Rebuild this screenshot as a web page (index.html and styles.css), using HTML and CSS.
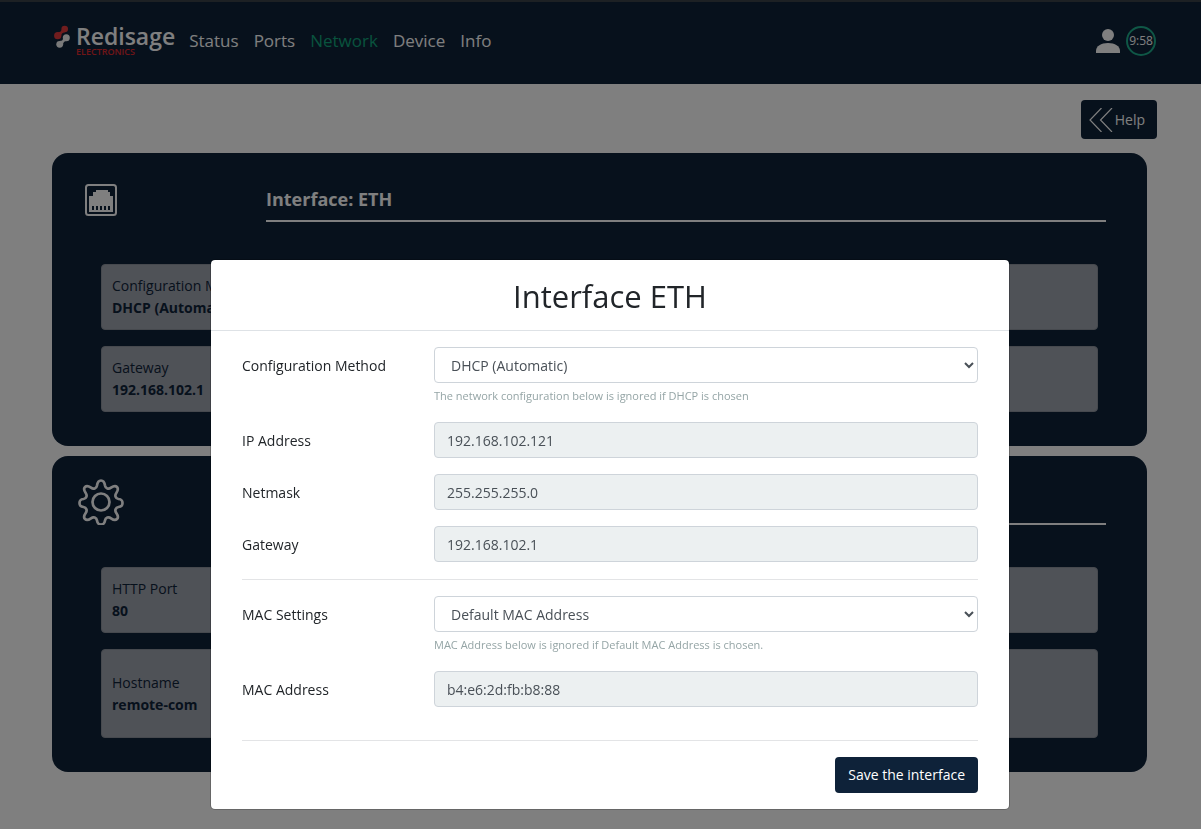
FILE: index.html
```html
<!DOCTYPE html>
<html lang="en">
<head>
<meta charset="utf-8">
<title>Redisage Electronics - Network</title>
<link rel="stylesheet" href="styles.css">
</head>
<body>
<header class="navbar">
  <a class="brand" href="#">
    <svg class="brand-mark" viewBox="0 0 16 24" aria-hidden="true">
      <g fill="#e23a3d"><circle cx="10.700" cy="4" r="3.300"/><circle cx="3.700" cy="10.700" r="3.600"/><path d="M7.500 4.500Q7.500 7.200 4 7.200L7.200 11.500Q7 7.500 11 7.200z"/></g>
      <g fill="#f5f5f5"><circle cx="12.300" cy="12.700" r="3.500"/><circle cx="5.700" cy="19.300" r="3.400"/><path d="M9 13.500Q9 16 5.500 16L9 20Q9 16.300 12.500 16z"/></g>
    </svg>
    <span class="brand-text"><span class="brand-name">Redisage</span><span class="brand-sub">ELECTRONICS</span></span>
  </a>
  <nav class="nav">
    <a href="#">Status</a>
    <a href="#">Ports</a>
    <a href="#" class="active">Network</a>
    <a href="#">Device</a>
    <a href="#">Info</a>
  </nav>
  <div class="session">
    <svg class="user" viewBox="0 0 24 24" fill="currentColor" aria-hidden="true"><circle cx="12" cy="6" r="6"/><path d="M0 24v-2c0-5 5-8 12-8s12 3 12 8v2z"/></svg>
    <span class="timer">9:58</span>
  </div>
</header>

<main class="page">
  <div class="toolbar">
    <button type="button" class="help"><svg class="chevrons" viewBox="0 0 24 24" fill="none" stroke="currentColor" stroke-width="1.200" aria-hidden="true"><path d="M12.500 0 1 12l11.500 12M23 0 11.500 12 23 24"/></svg>Help</button>
  </div>

  <section class="card">
    <div class="card-head">
      <svg class="icon-port" viewBox="0 0 32 32" aria-hidden="true"><rect x="1" y="1" width="30" height="30" rx="2.500" fill="none" stroke="currentColor" stroke-width="2"/><path fill="currentColor" d="M4 12h4V8h3V6h12v2h2v4h3v16H4z"/><path stroke="#0e2239" stroke-width="2" d="M8 22v4M12 22v4M16 22v4M20 22v4M24 22v4"/></svg>
      <h2 class="card-title">Interface: ETH</h2>
    </div>
    <dl class="tiles">
      <div class="tile"><dt>Configuration Method</dt><dd>DHCP (Automatic)</dd></div>
      <div class="tile"><dt>Gateway</dt><dd>192.168.102.1</dd></div>
    </dl>
  </section>

  <section class="card">
    <div class="card-head">
      <svg class="icon-gear" viewBox="0 0 46 46" fill="none" stroke="currentColor" stroke-width="2.700" stroke-linejoin="round" aria-hidden="true"><circle cx="23" cy="23" r="8.500"/><path d="M19 6.500C19.500 3 20.800 1.500 23 1.500s3.500 1.500 4 5c.5 3 3.500 4 6 2.200 2.800-2 4.600-2.200 6-.7s1.200 3.200-.7 6c-1.800 2.500-.8 5.500 2.200 6 3.500.5 4 1.800 4 4s-.5 3.500-4 4c-3 .5-4 3.500-2.200 6 2 2.800 2.200 4.500.7 6s-3.200 1.300-6-.7c-2.500-1.800-5.500-.8-6 2.200-.5 3.500-1.800 4-4 4s-3.500-.5-4-4c-.5-3-3.500-4-6-2.200-2.800 2-4.500 2.200-6 .7s-1.300-3.200.7-6c1.800-2.500.8-5.500-2.200-6-3.500-.5-4-1.800-4-4s.5-3.500 4-4c3-.5 4-3.500 2.200-6-2-2.800-2.200-4.500-.7-6s3.200-1.300 6 .7c2.500 1.800 5.500.8 6-2.200z"/></svg>
      <div class="card-title"></div>
    </div>
    <dl class="tiles">
      <div class="tile"><dt>HTTP Port</dt><dd>80</dd></div>
      <div class="tile tall"><dt>Hostname</dt><dd>remote-com</dd></div>
    </dl>
  </section>
</main>

<div class="backdrop">
  <form class="modal" role="dialog" aria-labelledby="dialog-title">
    <h1 class="modal-title" id="dialog-title">Interface ETH</h1>
    <div class="modal-body">
      <div class="row">
        <label for="method">Configuration Method</label>
        <div><select id="method" class="control"><option>DHCP (Automatic)</option></select>
        <small class="hint">The network configuration below is ignored if DHCP is chosen</small></div>
      </div>
      <div class="row"><label for="ip">IP Address</label><input class="control" id="ip" value="192.168.102.121" readonly></div>
      <div class="row"><label for="mask">Netmask</label><input class="control" id="mask" value="255.255.255.0" readonly></div>
      <div class="row"><label for="gw">Gateway</label><input class="control" id="gw" value="192.168.102.1" readonly></div>
      <hr>
      <div class="row">
        <label for="macset">MAC Settings</label>
        <div><select id="macset" class="control"><option>Default MAC Address</option></select>
        <small class="hint">MAC Address below is ignored if Default MAC Address is chosen.</small></div>
      </div>
      <div class="row"><label for="mac">MAC Address</label><input class="control" id="mac" value="b4:e6:2d:fb:b8:88" readonly></div>
      <hr class="last">
      <div class="actions"><button type="submit" class="save">Save the interface</button></div>
    </div>
  </form>
</div>
</body>
</html>
```
FILE: styles.css
```css
* { box-sizing: border-box; }

body {
  margin: 0;
  background: #fff;
  color: #212529;
  font-family: "Open Sans", "Noto Sans", sans-serif;
  font-size: 14px;
  line-height: 22px;
}

a { color: inherit; text-decoration: none; }

button, input, select { font: inherit; }

svg { display: block; flex: none; }

.navbar {
  display: flex;
  align-items: center;
  height: 84px;
  padding: 0 45px 4px 54px;
  border-top: 2px solid #3a4248;
  background: #0e2239;
  color: #fff;
}

.brand { display: flex; gap: 6px; }
.brand-mark { width: 16px; height: 24px; }
.brand-text { display: flex; flex-direction: column; }
.brand-name { font-size: 23px; font-weight: 600; line-height: 22px; }
.brand-sub { color: #e02b2f; font-size: 9px; font-weight: 600; line-height: 10px; }

.nav { display: flex; gap: 15px; margin-left: 14px; font-size: 17px; }
.nav .active { color: #12a67c; }

.session { display: flex; align-items: center; gap: 6px; margin-left: auto; }
.user { width: 24px; height: 24px; }
.timer {
  width: 30px;
  height: 30px;
  border: 2px solid #1fae8c;
  border-radius: 50%;
  font-size: 12px;
  line-height: 26px;
  text-align: center;
}

.page { padding: 16px 54px 56px 52px; }

.toolbar { display: flex; justify-content: flex-end; margin: 0 -10px 14px 0; }
.help {
  display: flex;
  align-items: center;
  gap: 2px;
  height: 39px;
  padding: 0 12px 0 8px;
  border: 0;
  border-radius: 4px;
  background: #0e2239;
  color: #fff;
}
.chevrons { width: 24px; height: 24px; }

.card {
  padding: 23px 49px 34px;
  border-radius: 16px;
  background: #0e2239;
  color: #fff;
}
.card + .card { margin-top: 10px; }

.card-head {
  display: grid;
  grid-template-columns: 188px 1fr;
  height: 88px;
  margin: 0 -8px 0 -23px;
}
.icon-port { width: 32px; height: 32px; margin: 8px 0 0 7px; }
.icon-gear { width: 46px; height: 46px; }
.card-title {
  height: 46px;
  margin: 0;
  padding-top: 12px;
  border-bottom: 2px solid #fff;
  font-size: 18px;
  font-weight: 700;
}

.tiles { display: grid; gap: 16px; margin: 0; }
.tile {
  display: flex;
  flex-direction: column;
  justify-content: center;
  height: 66px;
  padding: 0 10px;
  border: 1px solid #8c939c;
  border-radius: 4px;
  background: #9fa4ae;
  color: #0e2239;
}
.tile.tall { height: 89px; }
.tile dd { margin: 0; font-weight: 700; }

.backdrop {
  position: fixed;
  inset: 0;
  display: flex;
  align-items: flex-start;
  justify-content: center;
  padding: 259px 0 0 19px;
  background: rgba(0, 0, 0, 0.5);
}
.modal {
  flex: 0 1 800px;
  border: 1px solid rgba(0, 0, 0, 0.2);
  border-radius: 5px;
  background: #fff;
  background-clip: padding-box;
}
.modal-title {
  margin: 0;
  padding: 17px 16px 15px;
  border-bottom: 1px solid #dee2e6;
  font-size: 31px;
  font-weight: 500;
  line-height: 38px;
  text-align: center;
}
.modal-body {
  display: flex;
  flex-direction: column;
  gap: 16px;
  padding: 16px 31px;
}
.row {
  display: grid;
  grid-template-columns: 192px 1fr;
  align-items: start;
}
.row label { padding-top: 8px; }
.control {
  display: block;
  width: 100%;
  height: 36px;
  padding: 0 12px;
  border: 1px solid #ced4da;
  border-radius: 4px;
  background: #fff;
  color: #495057;
}
.control:read-only:not(select) { background: #ecf0f1; }
.hint {
  display: block;
  margin-top: 4px;
  padding-bottom: 1px;
  color: #95a5a6;
  font-size: 11px;
  font-weight: 500;
  line-height: 18px;
}
hr {
  width: 100%;
  margin: 1px 0 0;
  border: 0;
  border-top: 1px solid #e3e4e6;
}
hr.last { margin-top: 17px; }

.actions { display: flex; justify-content: flex-end; }
.save {
  height: 36px;
  padding: 0 13px;
  border: 0;
  border-radius: 4px;
  background: #0e2239;
  color: #fff;
}
```
